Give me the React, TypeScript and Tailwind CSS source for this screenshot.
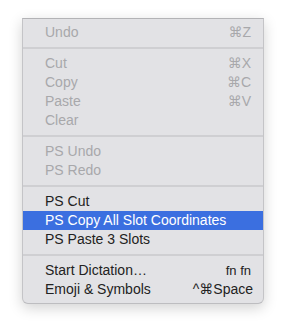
const groups = [
  [{ label: "Undo", shortcut: "⌘Z", disabled: true }],
  [
    { label: "Cut", shortcut: "⌘X", disabled: true },
    { label: "Copy", shortcut: "⌘C", disabled: true },
    { label: "Paste", shortcut: "⌘V", disabled: true },
    { label: "Clear", shortcut: "", disabled: true },
  ],
  [
    { label: "PS Undo", shortcut: "", disabled: true },
    { label: "PS Redo", shortcut: "", disabled: true },
  ],
  [
    { label: "PS Cut", shortcut: "" },
    { label: "PS Copy All Slot Coordinates", shortcut: "", active: true },
    { label: "PS Paste 3 Slots", shortcut: "" },
  ],
  [
    { label: "Start Dictation…", shortcut: "fn fn" },
    { label: "Emoji & Symbols", shortcut: "^⌘Space" },
  ],
];

type Item = { label: string; shortcut: string; disabled?: boolean; active?: boolean };

function Row({ item }: { item: Item }) {
  const color = item.active
    ? "bg-[#3b6fe0] text-white"
    : item.disabled
      ? "text-[#a8a8ab]"
      : "text-[#222222]";
  return (
    <div className={`flex h-[19px] items-center justify-between pb-px pl-[22px] pr-[12px] ${color}`}>
      <span>{item.label}</span>
      {item.shortcut && (
        <span className={item.shortcut === "fn fn" ? "text-[13px]" : item.shortcut === "^⌘Space" ? "-mr-[2px]" : ""}>
          {item.shortcut}
        </span>
      )}
    </div>
  );
}

export default function App() {
  return (
    <div className="h-[330px] w-[287px] bg-white pt-[18px] pl-[22px]">
      <div
        className="w-[242px] rounded-b-[6px] border border-t-[#b3b3b6] border-x-[#c4c4c7] border-b-[#bdbdc0] bg-[#e2e2e5] py-[4px] text-[14px] leading-none shadow-[0_4px_14px_rgba(0,0,0,0.18)]"
        style={{ fontFamily: '"Liberation Sans", "DejaVu Sans", sans-serif' }}
      >
        {groups.map((group, gi) => (
          <div key={gi}>
            {gi > 0 && (
              <div className="flex h-[12px] items-center">
                <div className="h-[2px] w-full bg-[#cfcfd2]" />
              </div>
            )}
            {group.map((item) => (
              <Row key={item.label} item={item} />
            ))}
          </div>
        ))}
      </div>
    </div>
  );
}
